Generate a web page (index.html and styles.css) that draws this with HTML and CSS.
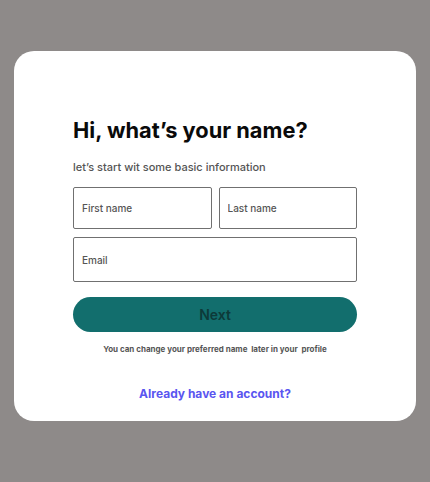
FILE: index.html
```html
<!DOCTYPE html>
<html lang="en">
<head>
  <meta charset="UTF-8">
  <meta name="viewport" content="width=device-width, initial-scale=1.0">
  <title>Sign up</title>
  <link rel="stylesheet" href="styles.css">
</head>
<body>
  <div class="card">
    <h1 class="title">Hi, what’s your name?</h1>
    <p class="subtitle">let’s start wit some basic information</p>
    <form class="form">
      <div class="row">
        <input class="field" type="text" placeholder="First name">
        <input class="field" type="text" placeholder="Last name">
      </div>
      <input class="field field-tall" type="email" placeholder="Email">
      <button class="next-btn" type="button">Next</button>
    </form>
    <p class="note">You can change your preferred name&nbsp; later in your&nbsp; profile</p>
    <a class="login-link" href="#">Already have an account?</a>
  </div>
</body>
</html>
```

FILE: styles.css
```css
html, body {
  margin: 0;
  padding: 0;
  height: 100%;
  font-family: Inter, "Noto Sans", sans-serif;
  background-color: #8e8a89;
}

body {
  padding: 51px 14px 0;
  box-sizing: border-box;
}

.card {
  background: #fff;
  border-radius: 20px;
  height: 370px;
  padding: 66px 59px 0;
  box-sizing: border-box;
  display: flex;
  flex-direction: column;
}

.title {
  margin: 0;
  font-size: 21.8px;
  font-weight: 700;
  color: #0a0a0a;
  line-height: 27px;
}

.subtitle {
  margin: 16px 0 0;
  font-size: 11px;
  font-weight: 500;
  color: #555;
  line-height: 14px;
}

.form {
  margin-top: 13px;
  display: flex;
  flex-direction: column;
  gap: 8px;
}

.row {
  display: flex;
  gap: 7px;
}

.field {
  flex: 1;
  min-width: 0;
  height: 42px;
  box-sizing: border-box;
  border: 1px solid #707070;
  border-radius: 2px;
  padding: 0 8px;
  font-family: inherit;
  font-size: 10px;
  font-weight: 500;
  color: #333;
  background: #fff;
}

.field::placeholder {
  color: #555;
}

.field-tall {
  flex: none;
  height: 45px;
}

.next-btn {
  margin-top: 7px;
  height: 35px;
  border: none;
  border-radius: 18px;
  background-color: #126e6d;
  color: #0d3a39;
  font-family: inherit;
  font-size: 14px;
  font-weight: 600;
  cursor: pointer;
}

.note {
  margin: 12px 0 0;
  text-align: center;
  font-size: 8px;
  font-weight: 700;
  color: #555;
}

.login-link {
  margin-top: 32px;
  align-self: center;
  font-size: 12px;
  font-weight: 700;
  color: #5a55f0;
  text-decoration: none;
}
```
